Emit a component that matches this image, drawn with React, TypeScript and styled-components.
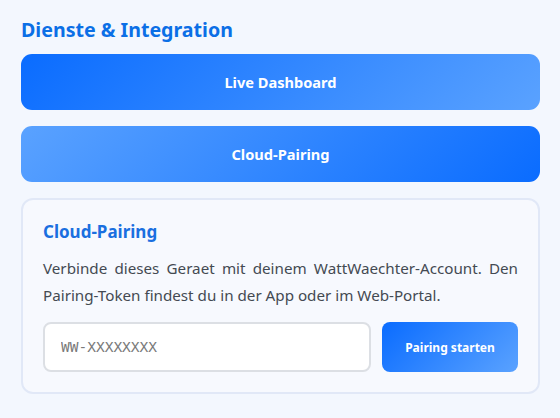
import React from "react";
import styled, { createGlobalStyle } from "styled-components";

const Global = createGlobalStyle`
  html, body { margin: 0; padding: 0; background: #f3f7fe; }
  body { font-family: "Noto Sans", "Open Sans", sans-serif; }
  * { box-sizing: border-box; }
`;

const Page = styled.div`
  padding: 17px 20px 20px 21px;
  display: flex;
  flex-direction: column;
`;

const Title = styled.h2`
  margin: 0 0 12px 0;
  font-size: 19.6px;
  line-height: 25px;
  font-weight: 700;
  color: #0b6fe6;
`;

const Stack = styled.div`
  display: flex;
  flex-direction: column;
  gap: 16px;
`;

const BigButton = styled.button<{ $reverse?: boolean }>`
  height: 56px;
  border: none;
  border-radius: 11px;
  background: ${(p) =>
    p.$reverse
      ? "linear-gradient(135deg, #5aa2ff 0%, #0a6cff 100%)"
      : "linear-gradient(135deg, #0a6cff 0%, #5aa2ff 100%)"};
  color: #fff;
  font-family: inherit;
  font-size: 14.6px;
  font-weight: 700;
  cursor: pointer;
`;

const Card = styled.section`
  border: 2px solid #e1e8f7;
  border-radius: 12px;
  background: #f7f9fe;
  padding: 20px;
  display: flex;
  flex-direction: column;
`;

const CardTitle = styled.h3`
  margin: 0;
  font-size: 17px;
  line-height: 24px;
  font-weight: 700;
  color: #1a6fe0;
`;

const Text = styled.p`
  margin: 11px 0 13px 0;
  font-size: 15.2px;
  line-height: 27px;
  color: #444a52;
  text-align: justify;
`;

const Row = styled.div`
  display: flex;
  gap: 11px;
`;

const Input = styled.input`
  flex: 1;
  min-width: 0;
  height: 50px;
  border: 2px solid #dcdfe4;
  border-radius: 8px;
  background: #fff;
  padding: 0 16px;
  font-family: "DejaVu Sans Mono", "Liberation Mono", monospace;
  font-size: 14.5px;
  color: #333;
  outline: none;
  &::placeholder { color: #7a7a7a; }
`;

const SmallButton = styled.button`
  width: 136px;
  height: 50px;
  border: none;
  border-radius: 8px;
  background: linear-gradient(135deg, #0a6cff 0%, #5aa2ff 100%);
  color: #fff;
  font-family: inherit;
  font-size: 12px;
  font-weight: 700;
  cursor: pointer;
`;

export default function App() {
  return (
    <>
      <Global />
      <Page>
        <Title>Dienste &amp; Integration</Title>
        <Stack>
          <BigButton>Live Dashboard</BigButton>
          <BigButton $reverse>Cloud-Pairing</BigButton>
          <Card>
            <CardTitle>Cloud-Pairing</CardTitle>
            <Text>
              Verbinde dieses Geraet mit deinem WattWaechter-Account. Den
              Pairing-Token findest du in der App oder im Web-Portal.
            </Text>
            <Row>
              <Input placeholder="WW-XXXXXXXX" />
              <SmallButton>Pairing starten</SmallButton>
            </Row>
          </Card>
        </Stack>
      </Page>
    </>
  );
}
